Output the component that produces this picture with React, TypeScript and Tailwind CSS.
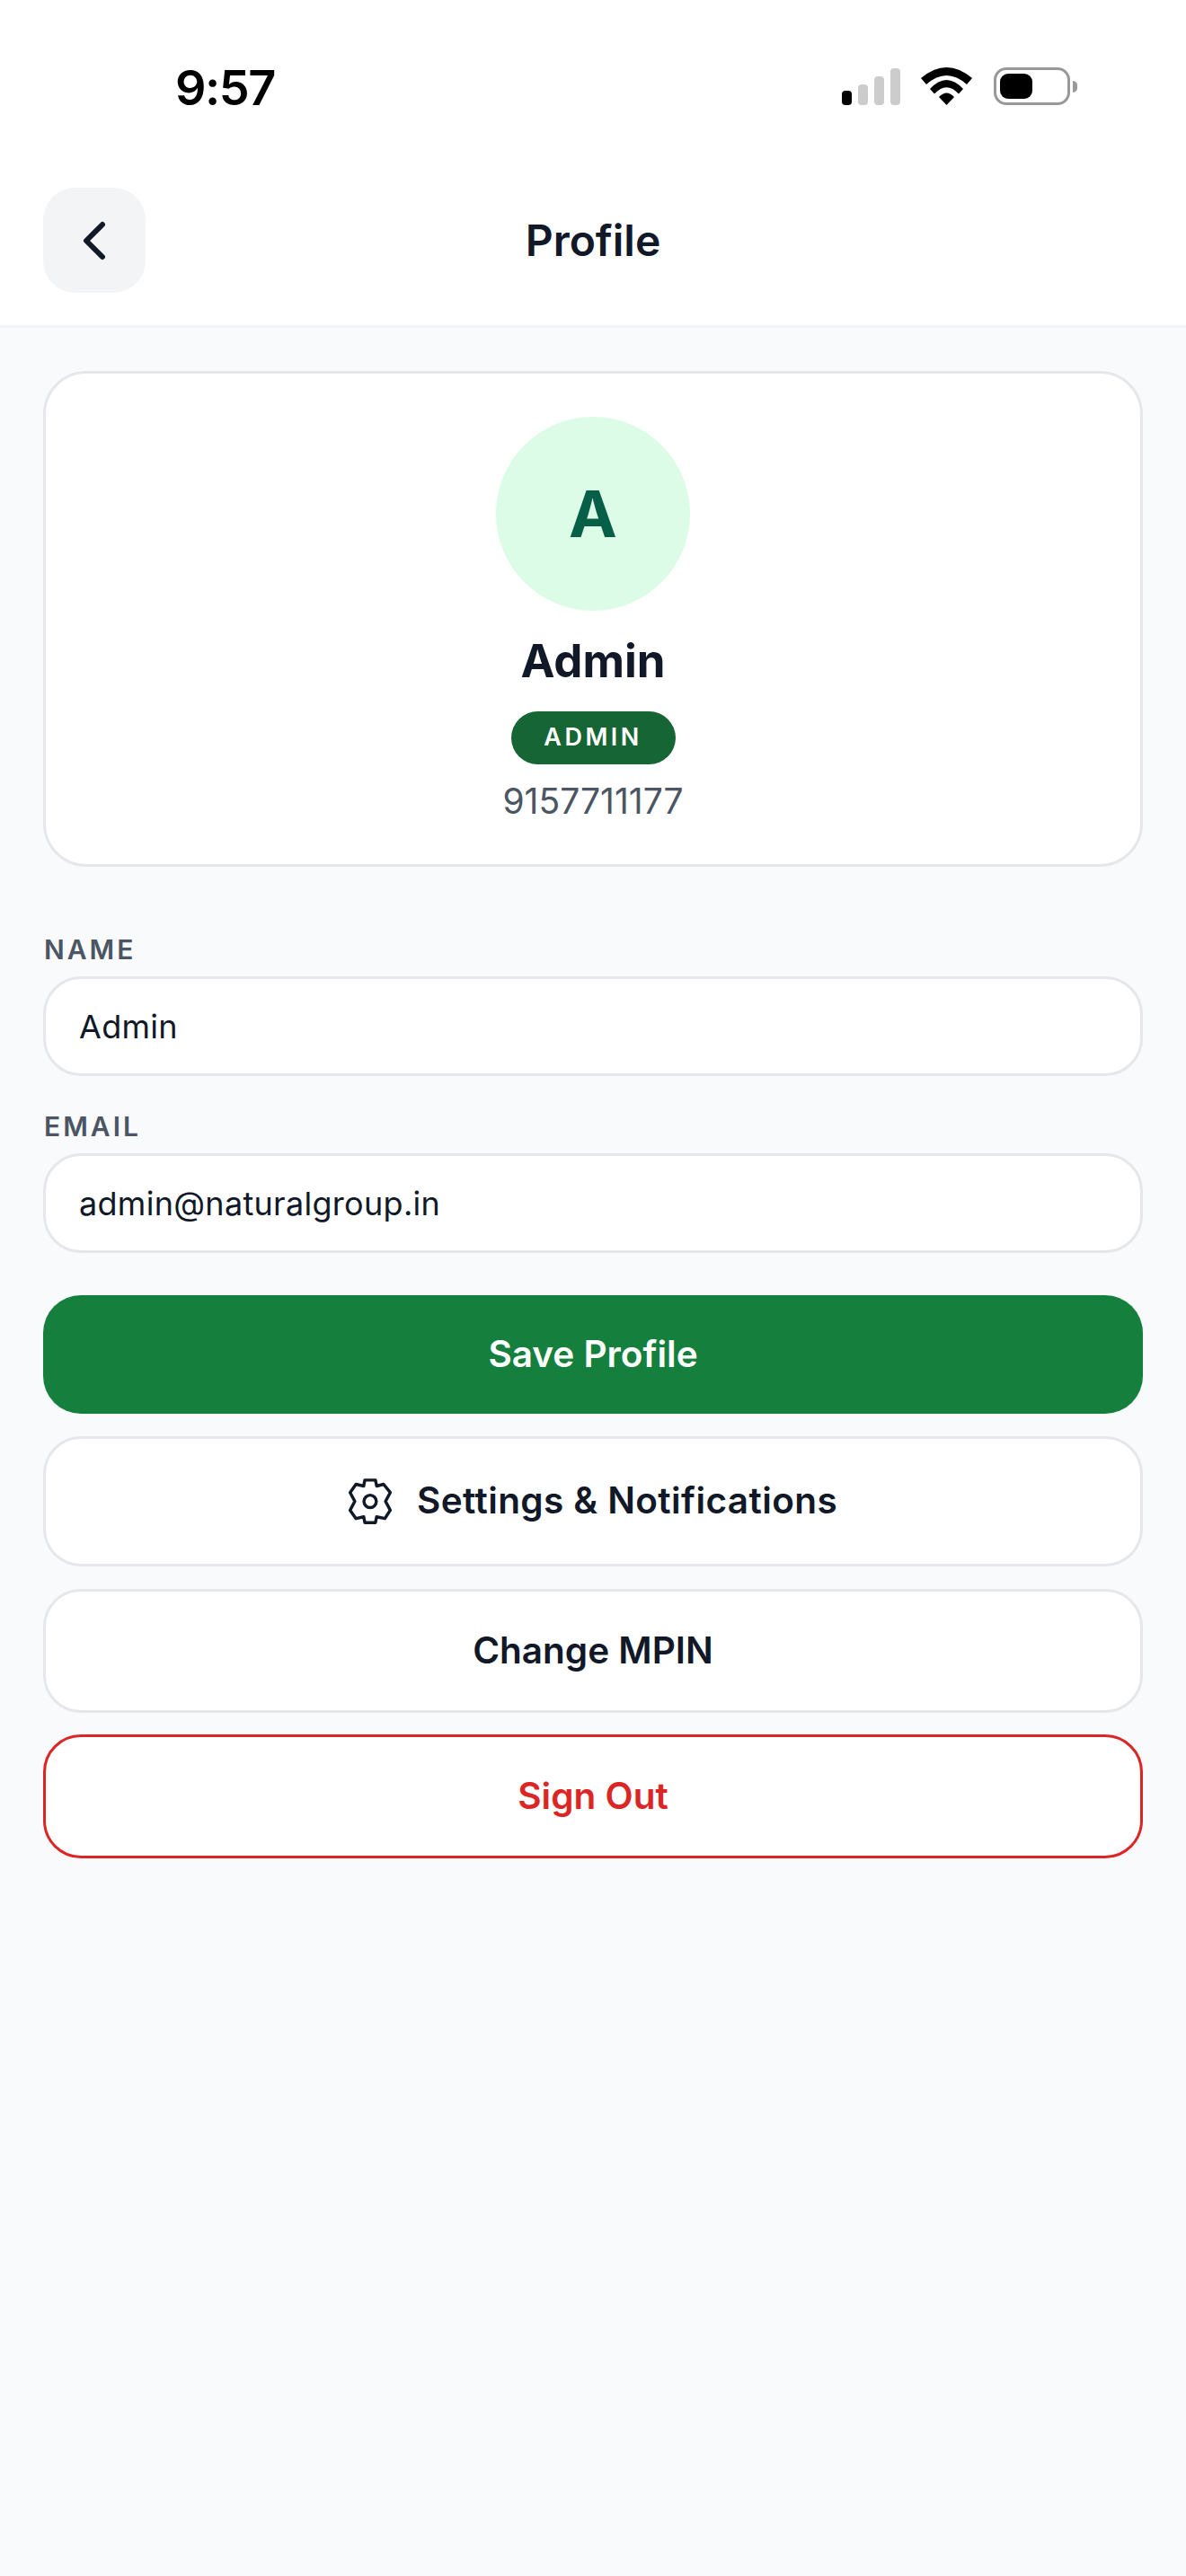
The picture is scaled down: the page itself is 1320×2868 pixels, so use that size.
import { ChevronLeft } from 'lucide-react';

function StatusBar() {
  return (
    <div className="flex h-[209px] items-start justify-between pl-[147px] pr-[73px] pt-[66px]">
      <span className="text-[54px] leading-[64px] font-semibold tracking-[-1.5px] text-black">9:57</span>
      <div className="mt-[9px] flex items-end">
        <div className="flex items-end gap-[7px]">
          <div className="h-[16px] w-[11px] rounded-[4px] bg-black"></div>
          <div className="h-[23px] w-[11px] rounded-[4px] bg-[#cccccc]"></div>
          <div className="h-[32px] w-[11px] rounded-[4px] bg-[#cccccc]"></div>
          <div className="h-[41px] w-[11px] rounded-[4px] bg-[#cccccc]"></div>
        </div>
        <svg className="ml-[23px]" width="57" height="42" viewBox="0 0 57 42" fill="#000">
          <path d="M0 12Q28.5 -12 57 12L51 19Q28.5 -1 6 19Z" />
          <path d="M10 24Q28.5 4 47 24L42 29.5Q28.5 15 15 29.5Z" />
          <path d="M20 33Q28.5 24 37 33L28.5 42Z" />
        </svg>
        <div className="ml-[24px] flex items-center">
          <div className="h-[42px] w-[85px] rounded-[14px] border-[3px] border-[#999999] p-[4px]">
            <div className="h-full w-[36px] rounded-[9px] bg-black"></div>
          </div>
          <div className="ml-[3px] h-[13px] w-[5px] rounded-r-full bg-[#999999]"></div>
        </div>
      </div>
    </div>
  );
}

function GearIcon() {
  return (
    <svg width="48" height="51" viewBox="9 7.5 48.7 51.5" fill="none" stroke="#111827" strokeWidth="3.5" strokeLinejoin="round">
      <path d="M27.3 9.3H39.3L40.7 16L48.5 14L56 23.3L50.7 33.3L56 43.3L50 52.7L40.7 50.7L39.3 57.3H27.3L26 50.7L17.3 52.7L10.7 43.3L16 33.3L10.7 23.3L17.3 14L26 16Z" />
      <circle cx="33.3" cy="33.3" r="7" />
    </svg>
  );
}

function Field({ label, value }: { label: string; value: string }) {
  return (
    <div>
      <label className="mb-[10px] block pl-[1px] text-[30px] leading-[40px] font-semibold tracking-[3px] text-[#4b5563]">
        {label}
      </label>
      <input
        readOnly
        value={value}
        className="block h-[111px] w-full rounded-[42px] border-[3px] border-[#e5e7eb] bg-white px-[37px] text-[36px] tracking-[0.3px] text-[#111827] outline-none"
      />
    </div>
  );
}

export default function App() {
  return (
    <div className="min-h-[2868px] bg-[#f9fafb] font-[Inter,sans-serif]">
      <div className="border-b-[3px] border-[#f3f4f6] bg-white px-[48px] pb-[36px]">
        <StatusBar />
        <div className="flex items-center justify-between">
          <button className="flex h-[117px] w-[114px] items-center justify-center rounded-[36px] bg-[#f3f4f6] text-[#111827]">
            <ChevronLeft size={72} strokeWidth={2} />
          </button>
          <h1 className="text-[48px] leading-[60px] font-semibold text-[#111827]">Profile</h1>
          <div className="w-[114px]"></div>
        </div>
      </div>

      <div className="p-[48px]">
        <div className="mb-[72px] flex h-[552px] flex-col items-center rounded-[48px] border-[3px] border-[#e5e7eb] bg-white pt-[48px]">
          <div className="flex h-[216px] w-[216px] items-center justify-center rounded-full bg-[#dcfce7] text-[72px] font-bold text-[#065f46]">
            A
          </div>
          <div className="mt-[26px] text-[51px] leading-[60px] font-bold text-[#111827]">Admin</div>
          <div className="mt-[26px] flex h-[59px] w-[183px] items-center justify-center rounded-full bg-[#166534] text-[27px] font-semibold tracking-[3.5px] text-white">
            ADMIN
          </div>
          <div className="mt-[14px] text-[39px] leading-[54px] text-[#4b5563]">9157711177</div>
        </div>

        <div className="flex flex-col gap-[36px]">
          <Field label="NAME" value="Admin" />
          <Field label="EMAIL" value="admin@naturalgroup.in" />
        </div>

        <div className="mt-[47px] flex flex-col">
          <button className="mb-[25px] flex h-[132px] w-full items-center justify-center rounded-[42px] bg-[#15803d] text-[40.5px] font-semibold text-white">
            Save Profile
          </button>
          <button className="mb-[25px] flex h-[145px] w-full items-center justify-center gap-[28px] rounded-[42px] border-[3px] border-[#e5e7eb] bg-white text-[40.5px] tracking-[0.4px] font-semibold text-[#111827]">
            <GearIcon />
            Settings &amp; Notifications
          </button>
          <button className="mb-[24px] flex h-[138px] w-full items-center justify-center rounded-[42px] border-[3px] border-[#e5e7eb] bg-white text-[40.5px] font-semibold text-[#111827]">
            Change MPIN
          </button>
          <button className="flex h-[138px] w-full items-center justify-center rounded-[42px] border-[3px] border-[#dc2626] bg-white text-[40.5px] font-semibold text-[#dc2626]">
            Sign Out
          </button>
        </div>
      </div>
    </div>
  );
}
